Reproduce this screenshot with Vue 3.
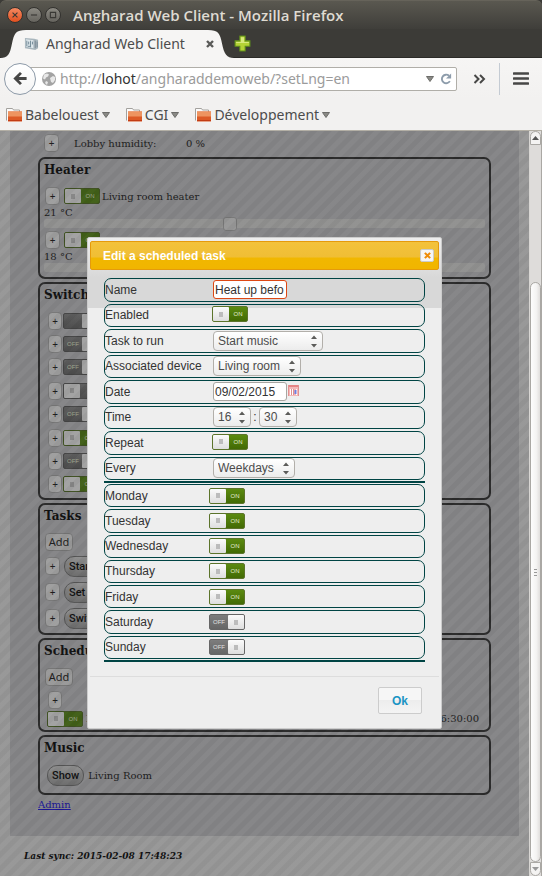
<script setup>
import { ref } from 'vue'

const days = ref([
  { name: 'Monday', on: true },
  { name: 'Tuesday', on: true },
  { name: 'Wednesday', on: true },
  { name: 'Thursday', on: true },
  { name: 'Friday', on: true },
  { name: 'Saturday', on: false },
  { name: 'Sunday', on: false }
])
const bookmarks = ['Babelouest', 'CGI', 'Développement']
const heaters = ref([
  { name: 'Living room heater', temp: '21 °C', value: 42, on: true },
  { name: 'Lobby heater', temp: '18 °C', value: 30, on: true }
])
const switches = ref([
  { label: '', on: false },
  { label: 'OFF', on: false },
  { label: 'OFF', on: false },
  { label: '', on: true, gray: true },
  { label: 'OFF', on: false },
  { label: 'ON', on: true },
  { label: 'OFF', on: false },
  { label: 'ON', on: true }
])
const tasks = ['Start', 'Set l', 'Switch']
const form = ref({ name: 'Heat up befo', enabled: true, date: '09/02/2015', repeat: true })
const scheduled = ref(true)
</script>

<template>
  <div class="window">
    <header class="titlebar">
      <button class="wm close" aria-label="Close window">
        <svg viewBox="0 0 16 16"><path d="M5.2 5.2l5.6 5.6M10.8 5.2l-5.6 5.6" /></svg>
      </button>
      <button class="wm" aria-label="Minimize window">
        <svg viewBox="0 0 16 16"><path d="M4.5 8h7" /></svg>
      </button>
      <button class="wm" aria-label="Maximize window">
        <svg viewBox="0 0 16 16"><path d="M5 5h6v6H5z" /></svg>
      </button>
      <span class="wintitle">Angharad Web Client - Mozilla Firefox</span>
    </header>

    <div class="tabs">
      <div class="tab">
        <svg class="tabshape" viewBox="0 0 234 28" preserveAspectRatio="none">
          <path d="M0 28C8 28 10 24 12 14C14 4 16 1 26 1H208C218 1 220 4 222 14C224 24 227 28 234 28Z" fill="#f6f5f4" />
        </svg>
        <svg class="fav" viewBox="0 0 16 16">
          <path d="M1 2l10 1 4 1v9l-3 2-11-2z" fill="#a9b6bd" />
          <path d="M2 3.500l8 1v8.500l-8-1.500z" fill="#dfe8ec" />
          <path d="M3 5v6M5 6v3M7 5v7M9 6v3M4 11h3" stroke="#6c8391" />
          <path d="M12 5v8M14 6v6" stroke="#788893" />
        </svg>
        <span class="tabtitle">Angharad Web Client</span>
        <button class="plain tabclose" aria-label="Close tab">
          <svg viewBox="0 0 10 10"><path d="M2 2l6 6M8 2l-6 6" stroke="#5a5a58" stroke-width="2.400" /></svg>
        </button>
      </div>
      <button class="plain newtab" aria-label="New tab">
        <svg viewBox="0 0 16 16">
          <path d="M5.500 1h5v4.500H15v5h-4.500V15h-5v-4.500H1v-5h4.500z" fill="#b5d335" stroke="#5d8c1c" />
          <path d="M6.500 2h3v4.500H14v1H2v-1h4.500z" fill="#d9ea7c" />
        </svg>
      </button>
    </div>

    <nav class="navbar">
      <button class="back" aria-label="Back">
        <svg viewBox="0 0 16 16"><path d="M14.500 8H3M8.500 2L2.500 8l6 6" fill="none" stroke="#474746" stroke-width="3" /></svg>
      </button>
      <div class="urlbar">
        <svg class="globe" viewBox="0 0 16 16">
          <circle cx="8" cy="8" r="7" fill="#a3a3a3" />
          <path d="M3 3.500l3-1 2 1-1 2-2 1-1 2-2-1zM9 7l3-2 2 1v3l-2 3-2-1zM5 10l2 1-1 3-2-2z" fill="#e8e8e8" />
        </svg>
        <span class="url">http://<b>lohot</b>/angharaddemoweb/?setLng=en</span>
        <svg class="caret" viewBox="0 0 8 6"><path d="M0.500 0.500h7L4 5.500z" /></svg>
        <button class="plain reload" aria-label="Reload">
          <svg viewBox="0 0 14 14">
            <path d="M11.500 9.500A5 5 0 1 1 10.500 3.200" fill="none" stroke="#8d9cab" stroke-width="2.200" />
            <path d="M13 0.500v6H7z" fill="#8d9cab" />
          </svg>
        </button>
      </div>
      <button class="plain more" aria-label="More tools">
        <svg viewBox="0 0 12 10"><path d="M1 1l4 4-4 4M6.500 1l4 4-4 4" fill="none" stroke="#474746" stroke-width="2" /></svg>
      </button>
      <span class="sep"></span>
      <button class="plain menu" aria-label="Menu">
        <svg viewBox="0 0 16 13"><path d="M1 1.500h14M1 6.500h14M1 11.500h14" stroke="#474746" stroke-width="2.600" stroke-linecap="round" /></svg>
      </button>
    </nav>

    <div class="bookmarks">
      <button v-for="b in bookmarks" :key="b" class="plain bookmark">
        <svg class="folder" viewBox="0 0 16 14">
          <path d="M0.500 12.500V0.500h6l1 1.500h6v3" fill="#fbfbfb" stroke="#a3a19d" />
          <rect x="2" y="3.500" width="14" height="10" fill="#dc5a26" />
          <path d="M2 3.500h14v5H2z" fill="#ee9460" />
          <path d="M2 12.500h14" stroke="#c23c14" />
        </svg>
        <span>{{ b }}</span>
        <svg class="caret" viewBox="0 0 8 6"><path d="M0.500 0.500h7L4 5.500z" /></svg>
      </button>
    </div>

    <div class="viewport">
      <main class="page">
        <div class="content">
          <div class="humidity">
            <button class="plus">+</button>
            <span class="hname">Lobby humidity:</span>
            <span>0 %</span>
          </div>

          <section class="panel heater">
            <h2>Heater</h2>
            <div v-for="h in heaters" :key="h.name" class="heat">
              <div class="line">
                <button class="plus">+</button>
                <label class="toggle" :class="{ on: h.on }">
                  <input v-model="h.on" type="checkbox" :aria-label="h.name" /><i></i><em>ON</em>
                </label>
                <span>{{ h.name }}</span>
              </div>
              <div class="temp">{{ h.temp }}</div>
              <input v-model="h.value" class="slider" type="range" :aria-label="h.name + ' temperature'" />
            </div>
          </section>

          <section class="panel">
            <h2>Switches</h2>
            <div class="switchlist">
              <div v-for="(s, i) in switches" :key="i" class="line">
                <button class="plus">+</button>
                <label class="toggle" :class="{ on: s.on, gray: s.gray }">
                  <input v-model="s.on" type="checkbox" :aria-label="'Switch ' + (i + 1)" /><i></i><em>{{ s.label }}</em>
                </label>
              </div>
            </div>
          </section>

          <section class="panel">
            <h2>Tasks</h2>
            <button class="add">Add</button>
            <div class="tasklist">
              <div v-for="t in tasks" :key="t" class="line">
                <button class="plus">+</button>
                <button class="pill">{{ t }}</button>
              </div>
            </div>
          </section>

          <section class="panel">
            <h2>Schedule</h2>
            <button class="add">Add</button>
            <div class="schedule">
              <button class="plus">+</button>
              <div class="line">
                <label class="toggle on">
                  <input v-model="scheduled" type="checkbox" aria-label="Scheduled task" /><i></i><em>ON</em>
                </label>
                <span class="taskname">Heat up</span>
                <span class="when">2015-02-09 16:30:00</span>
              </div>
            </div>
          </section>

          <section class="panel">
            <h2>Music</h2>
            <div class="line music">
              <button class="pill">Show</button>
              <span>Living Room</span>
            </div>
          </section>

          <a href="#" class="admin">Admin</a>
        </div>
        <footer class="sync">Last sync: 2015-02-08 17:48:23</footer>

        <div class="overlay">
          <div class="dialog" role="dialog" aria-labelledby="dlg-title">
            <div class="dlgtitle">
              <span id="dlg-title">Edit a scheduled task</span>
              <button class="dlgclose" aria-label="Close">
                <svg viewBox="0 0 8 8"><path d="M1 1l6 6M7 1L1 7" stroke="#ef8c08" stroke-width="2.400" /></svg>
              </button>
            </div>
            <form class="form" @submit.prevent>
              <div class="group main">
                <div class="row">
                  <label for="f-name">Name</label>
                  <input id="f-name" v-model="form.name" class="text focus" type="text" />
                </div>
                <div class="row">
                  <label for="f-enabled">Enabled</label>
                  <label class="toggle" :class="{ on: form.enabled }">
                    <input id="f-enabled" v-model="form.enabled" type="checkbox" /><i></i><em>{{ form.enabled ? 'ON' : 'OFF' }}</em>
                  </label>
                </div>
                <div class="row">
                  <label for="f-task">Task to run</label>
                  <span class="sel wide"><select id="f-task"><option>Start music</option></select>
                    <svg viewBox="0 0 7 14"><path d="M0 4l3.500-4L7 4zM0 10l3.500 4L7 10z" /></svg></span>
                </div>
                <div class="row">
                  <label for="f-device">Associated device</label>
                  <span class="sel medium"><select id="f-device"><option>Living room</option></select>
                    <svg viewBox="0 0 7 14"><path d="M0 4l3.500-4L7 4zM0 10l3.500 4L7 10z" /></svg></span>
                </div>
                <div class="row">
                  <label for="f-date">Date</label>
                  <input id="f-date" v-model="form.date" class="text" type="text" />
                  <button type="button" class="plain cal" aria-label="Pick a date">
                    <svg viewBox="0 0 11 11">
                      <rect width="11" height="11" fill="#f3b9b9" />
                      <rect width="11" height="2" fill="#e58585" />
                      <path d="M0.500 0v11M10.500 0v11" stroke="#e39090" />
                      <path d="M2.500 4v6M4.500 4v6M8.500 4v6" stroke="#fff" />
                      <path d="M3.500 4v6M5.500 4v6" stroke="#e38f8f" />
                      <path d="M7.500 5v4" stroke="#6f7fe0" stroke-width="2" />
                    </svg>
                  </button>
                </div>
                <div class="row">
                  <label for="f-hour">Time</label>
                  <span class="sel tiny"><select id="f-hour"><option>16</option></select>
                    <svg viewBox="0 0 7 14"><path d="M0 4l3.500-4L7 4zM0 10l3.500 4L7 10z" /></svg></span>
                  <span class="colon">:</span>
                  <span class="sel tiny"><select id="f-minute" aria-label="Minute"><option>30</option></select>
                    <svg viewBox="0 0 7 14"><path d="M0 4l3.500-4L7 4zM0 10l3.500 4L7 10z" /></svg></span>
                </div>
                <div class="row">
                  <label for="f-repeat">Repeat</label>
                  <label class="toggle" :class="{ on: form.repeat }">
                    <input id="f-repeat" v-model="form.repeat" type="checkbox" /><i></i><em>{{ form.repeat ? 'ON' : 'OFF' }}</em>
                  </label>
                </div>
                <div class="row">
                  <label for="f-every">Every</label>
                  <span class="sel small"><select id="f-every"><option>Weekdays</option></select>
                    <svg viewBox="0 0 7 14"><path d="M0 4l3.500-4L7 4zM0 10l3.500 4L7 10z" /></svg></span>
                </div>
              </div>
              <div class="group days">
                <div v-for="d in days" :key="d.name" class="row">
                  <label :for="'d-' + d.name">{{ d.name }}</label>
                  <label class="toggle" :class="{ on: d.on }">
                    <input :id="'d-' + d.name" v-model="d.on" type="checkbox" /><i></i><em>{{ d.on ? 'ON' : 'OFF' }}</em>
                  </label>
                </div>
              </div>
            </form>
            <div class="buttons"><button class="ok">Ok</button></div>
          </div>
        </div>
      </main>

      <div class="scrollbar" aria-hidden="true">
        <span class="sbtn"><svg viewBox="0 0 7 4"><path d="M0 4l3.500-4L7 4z" fill="#555" /></svg></span>
        <span class="trough"></span>
        <span class="thumb"><b></b><b></b><b></b></span>
        <span class="sbtn down"><svg viewBox="0 0 7 4"><path d="M0 0l3.500 4L7 0z" fill="#999" /></svg></span>
      </div>
    </div>
  </div>
</template>

<style>
body {
  margin: 0;
  background: #3c3b37;
}
</style>

<style scoped>
* {
  box-sizing: border-box;
}
.window {
  min-height: 100vh;
  display: flex;
  flex-direction: column;
  font-family: 'Noto Sans', sans-serif;
  font-size: 14px;
  color: #4c4c4c;
}
button,
input,
select {
  font: inherit;
  color: inherit;
  margin: 0;
  padding: 0;
}
svg {
  display: block;
}
.plain {
  border: 0;
  background: none;
  display: flex;
  align-items: center;
  justify-content: center;
}

/* window frame */
.titlebar {
  height: 29px;
  display: flex;
  align-items: center;
  gap: 3px;
  padding-left: 7px;
  background: linear-gradient(#5a5850, #3f3e3a);
  border-top: 1px solid #66635a;
  border-radius: 6px 6px 0 0;
}
.wm {
  width: 16px;
  height: 16px;
  border: 1px solid #33322f;
  border-radius: 50%;
  background: linear-gradient(#8b8982, #66645e);
}
.wm svg {
  width: 14px;
  height: 14px;
  fill: none;
  stroke: #393834;
  stroke-width: 1.300;
}
.wm.close {
  background: linear-gradient(#f58a62, #e2501f);
}
.wintitle {
  margin-left: 9px;
  font-family: 'Open Sans', sans-serif;
  font-size: 15px;
  line-height: 20px;
  font-weight: 600;
  color: #dfdbd2;
  white-space: nowrap;
}
.tabs {
  height: 29px;
  display: flex;
  align-items: center;
  background: #3c3b37;
  border-bottom: 1px solid #2b2a27;
}
.tab {
  position: relative;
  display: flex;
  align-items: center;
  width: 234px;
  height: 29px;
  padding: 0 17px 0 24px;
  margin-bottom: -1px;
}
.tabshape {
  position: absolute;
  left: 0;
  top: 0;
  width: 100%;
  height: 100%;
}
.fav {
  position: relative;
  width: 15px;
  height: 15px;
}
.tabtitle {
  position: relative;
  margin-left: 7px;
  flex: 1;
}
.tabclose {
  position: relative;
  width: 14px;
  height: 14px;
}
.tabclose svg {
  width: 10px;
  height: 10px;
}
.newtab svg {
  width: 17px;
  height: 17px;
}
.navbar {
  height: 41px;
  display: flex;
  align-items: center;
  background: linear-gradient(#f6f5f4, #f2f1f0);
  padding: 0 13px 0 4px;
}
.back {
  position: relative;
  z-index: 1;
  width: 32px;
  height: 32px;
  border: 1px solid #8d9aa8;
  border-radius: 50%;
  background: linear-gradient(#fff, #f4f4f4);
  display: flex;
  align-items: center;
  justify-content: center;
}
.back svg {
  width: 15px;
  height: 15px;
}
.urlbar {
  flex: 1;
  height: 24px;
  display: flex;
  align-items: center;
  margin-left: -10px;
  padding: 0 4px 0 14px;
  background: #fff;
  border: 1px solid #b0aea8;
  border-radius: 0 2px 2px 0;
}
.globe {
  width: 16px;
  height: 16px;
}
.url {
  flex: 1;
  margin-left: 3px;
  color: #9b9b9b;
  white-space: nowrap;
}
.url b {
  font-weight: 400;
  color: #333;
}
.caret {
  width: 8px;
  height: 6px;
  fill: #8a8a86;
  stroke: #6d6d6a;
}
.reload {
  margin-left: 6px;
}
.reload svg {
  width: 12px;
  height: 12px;
}
.more {
  width: 42px;
  padding-left: 3px;
}
.more svg {
  width: 13px;
  height: 10px;
}
.sep {
  width: 1px;
  height: 32px;
  background: #c4cbd3;
}
.menu {
  margin-left: 13px;
}
.menu svg {
  width: 16px;
  height: 13px;
}
.bookmarks {
  height: 32px;
  display: flex;
  align-items: center;
  gap: 16px;
  padding: 0 6px;
  background: #f2f1f0;
  border-bottom: 1px solid #b3afa5;
}
.bookmark {
  gap: 3px;
}
.folder {
  width: 16px;
  height: 14px;
}

/* web page */
.viewport {
  flex: 1;
  display: flex;
}
.page {
  position: relative;
  flex: 1;
  padding: 0 10px;
  background: #979797;
  color: #1d1d1d;
  font-family: 'DejaVu Serif', serif;
  font-size: 10px;
}
.content {
  min-height: 705px;
  padding: 0 28px;
  background: #858587;
  display: flex;
  flex-direction: column;
  gap: 3px;
}
.humidity {
  height: 23px;
  display: flex;
  align-items: center;
  padding: 1px 0 0 6px;
}
.hname {
  width: 112px;
  margin-left: 15px;
}
.panel {
  border: 2px solid #2a2a2a;
  border-radius: 7px;
  padding: 0 4px 2px;
}
h2 {
  margin: 0;
  height: 22px;
  line-height: 23px;
  font-size: 12px;
  color: #111;
}
.line {
  display: flex;
  align-items: center;
}
.plus {
  width: 15px;
  height: 18px;
  border: 1px solid #777;
  border-radius: 4px;
  background: #9e9e9e;
  font-family: 'Noto Sans', sans-serif;
  font-size: 10px;
  line-height: 14px;
}
.heater {
  padding-bottom: 5px;
}
.heat {
  padding-top: 3px;
}
h2 + .heat {
  padding-top: 6px;
}
.heat .line {
  height: 18px;
  padding-left: 1px;
}
.heat .toggle {
  margin: 0 2px 0 4px;
}
.temp {
  height: 14px;
  line-height: 16px;
}
.slider {
  display: block;
  width: 100%;
  height: 9px;
  border: 0;
  border-radius: 2px;
  background: #919190;
  appearance: none;
}
.slider::-webkit-slider-thumb {
  appearance: none;
  width: 14px;
  height: 14px;
  border: 1px solid #777;
  border-radius: 3px;
  background: #979797;
}
.switchlist {
  height: 187px;
  margin-top: 3px;
  padding: 0 4px;
  display: grid;
  grid-template-rows: repeat(8, 1fr);
}
.switchlist .plus,
.schedule .plus {
  width: 14px;
}
.switchlist .toggle {
  margin-left: 1px;
}
.add {
  display: block;
  margin: 6px 0 0 1px;
  width: 28px;
  height: 18px;
  border: 1px solid #747474;
  border-radius: 4px;
  background: #999;
  font-family: 'Noto Sans', sans-serif;
  font-size: 11px;
  line-height: 14px;
}
.tasklist {
  margin-top: 2px;
  padding: 0 1px;
}
.tasklist .line {
  height: 26px;
  gap: 4px;
}
.pill {
  height: 21px;
  padding: 0 4px;
  border: 1px solid #555;
  border-radius: 10px;
  background: linear-gradient(#8e8e8e, #6c6c6c);
  font-family: Roboto, sans-serif;
  font-size: 11px;
  font-weight: 500;
  line-height: 20px;
  color: #111;
}
.schedule {
  padding: 5px 3px 0;
}
.schedule > .plus {
  display: block;
  margin-left: 1px;
}
.schedule .line {
  height: 19px;
}
.taskname {
  margin-left: 3px;
  flex: 1;
}
.when {
  padding-right: 3px;
}
.music {
  height: 32px;
  padding-left: 3px;
  gap: 4px;
}
.admin {
  align-self: flex-start;
  margin-top: 1px;
  color: #1a1595;
}
.sync {
  padding: 13px 14px;
  font-size: 9px;
  line-height: 14px;
  font-weight: 700;
  font-style: italic;
  color: #111;
}

/* on/off switches */
.toggle {
  position: relative;
  flex: none;
  display: flex;
  width: 36px;
  height: 16px;
  border: 1px solid #666;
  border-radius: 2px;
  background: linear-gradient(#7d7d7d, #666);
  flex-direction: row-reverse;
}
.toggle.on {
  flex-direction: row;
  border-color: #5c742b;
  background: linear-gradient(#5b8a10, #426a04);
}
.toggle.gray {
  border-color: #555;
  background: #585858;
}
.toggle input {
  position: absolute;
  inset: 0;
  opacity: 0;
}
.toggle i {
  width: 16px;
  border-radius: 1px;
  background: linear-gradient(#fbfbfb, #dedede);
  display: flex;
  align-items: center;
  justify-content: center;
}
.toggle i::before {
  content: '';
  width: 4px;
  height: 5px;
  background: #bcbcbc;
}
.toggle em {
  flex: 1;
  font: 400 6px/14px 'Liberation Sans', sans-serif;
  text-align: center;
  color: #e4ecd2;
}
.toggle:not(.on) em {
  color: #e0e0e0;
}
.content .toggle {
  border-color: #444;
  background: linear-gradient(#5e5e5e, #4c4c4c);
}
.content .toggle.on:not(.gray) {
  border-color: #3f5022;
  background: #415f18;
}
.content .toggle i {
  background: #a2a2a2;
}
.content .toggle i::before {
  background: #858585;
}
.content .toggle em {
  color: #a0a690;
}

/* modal */
.overlay {
  position: absolute;
  inset: 0;
  display: flex;
  justify-content: center;
  align-items: flex-start;
  padding-top: 106px;
  background: repeating-linear-gradient(135deg, rgba(0, 0, 0, 0.03) 0 4px, rgba(255, 255, 255, 0.015) 5px 9px, rgba(0, 0, 0, 0.03) 10px);
}
.dialog {
  width: 355px;
  padding: 3px 2px;
  border: 1px solid #ccc;
  border-radius: 2px;
  background: linear-gradient(#eee, #d8d8d8 40px, #d8d8d8 70px, #eee 70px);
  font-family: 'Liberation Sans', sans-serif;
  font-size: 12px;
  color: #333;
}
.dlgtitle {
  height: 29px;
  display: flex;
  align-items: center;
  justify-content: space-between;
  padding: 0 4px 0 12px;
  border: 1px solid #e59a0c;
  border-radius: 2px;
  background: linear-gradient(#f3c23c, #f0be35 55%, #f1b700 60%, #f1b500);
  color: #fff;
  font-size: 12px;
  font-weight: 700;
}
.dlgclose {
  width: 14px;
  height: 13px;
  border: 1px solid #ccc;
  border-radius: 2px;
  background: #f6f6f6;
  display: flex;
  align-items: center;
  justify-content: center;
}
.dlgclose svg {
  width: 7px;
  height: 7px;
}
.form {
  padding: 8px 14px 14px;
}
.group {
  display: grid;
  row-gap: 2px;
  grid-auto-rows: 1fr;
  border-bottom: 2px solid #044;
}
.main {
  height: 205px;
  padding-bottom: 1px;
}
.days {
  height: 179px;
  padding: 1px 0;
}
.row {
  display: flex;
  align-items: center;
  min-height: 0;
  border: 1px solid #044;
  border-radius: 7px;
}
.row > label:first-child {
  width: 108px;
}
.row .toggle {
  margin: 0 0 2px -1px;
}
.days .row .toggle {
  margin: 0 0 0 -4px;
}
.text {
  width: 74px;
  height: 19px;
  padding: 0 1px;
  border: 1px solid #a8a6a2;
  border-radius: 3px;
  background: #fff;
}
.text.focus {
  border-color: #dd4814;
}
.cal {
  margin: 0 0 2px 1px;
}
.cal svg {
  width: 11px;
  height: 11px;
}
.sel {
  position: relative;
  height: 20px;
}
.sel select {
  display: block;
  width: 100%;
  height: 100%;
  padding: 0 0 0 4px;
  border: 1px solid #b2afaa;
  border-radius: 4px;
  background: linear-gradient(#fff, #ececec);
  appearance: none;
  color: #4c4c4c;
}
.sel svg {
  position: absolute;
  right: 6px;
  top: 4px;
  width: 6px;
  height: 13px;
  fill: #5c5c5a;
  pointer-events: none;
}
.wide {
  width: 110px;
}
.medium {
  width: 88px;
}
.small {
  width: 82px;
}
.tiny {
  width: 38px;
}
.colon {
  width: 8px;
  text-align: center;
}
.buttons {
  display: flex;
  justify-content: flex-end;
  padding: 10px 17px 11px;
  border-top: 1px solid #ddd;
}
.ok {
  width: 44px;
  height: 27px;
  border: 1px solid #ccc;
  border-radius: 2px;
  background: linear-gradient(#f6f6f6 50%, #ededed 50%, #f4f4f4);
  color: #1c94c4;
  font-weight: 700;
}

/* scrollbar */
.scrollbar {
  width: 13px;
  display: flex;
  flex-direction: column;
  background: #dedcda;
  border-left: 1px solid #d8d6d3;
  border-right: 1px solid #aaa8a4;
}
.sbtn {
  height: 14px;
  border: 1px solid #aaa8a4;
  border-radius: 6px 6px 0 0;
  background: #f4f3f2;
  display: flex;
  align-items: center;
  justify-content: center;
}
.sbtn.down {
  border-radius: 0 0 6px 6px;
}
.sbtn svg {
  width: 7px;
  height: 4px;
}
.trough {
  flex: 138;
}
.thumb {
  flex: 580;
  display: flex;
  flex-direction: column;
  align-items: center;
  justify-content: center;
  gap: 2px;
  border: 1px solid #aaa8a4;
  border-radius: 6px;
  background: linear-gradient(90deg, #fdfdfd, #f4f3f2 60%, #e0dedc);
}
.thumb b {
  width: 3px;
  height: 1px;
  background: #999;
}
</style>
